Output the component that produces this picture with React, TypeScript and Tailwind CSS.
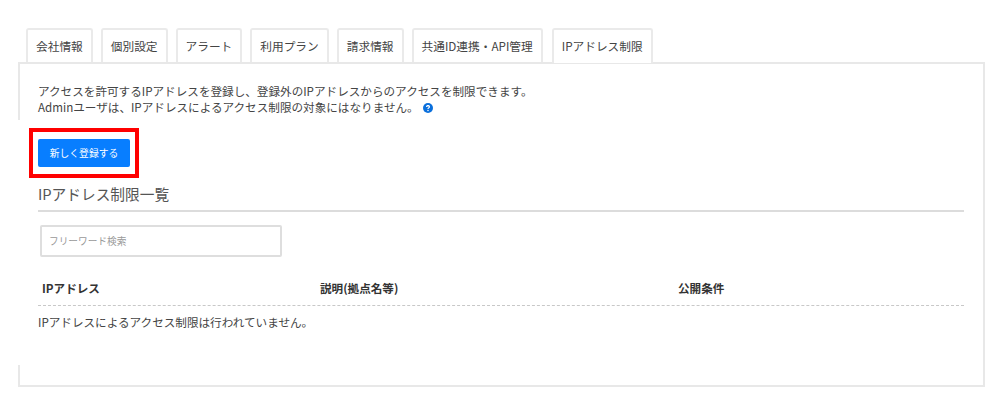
import React from "react";

const tabs = ["会社情報", "個別設定", "アラート", "利用プラン", "請求情報", "共通ID連携・API管理", "IPアドレス制限"];

function Tabs() {
  return (
    <div className="flex gap-[8px] pl-[8px] h-[35px] relative z-10">
      {tabs.map((tab, i) => (
        <div
          key={tab}
          className={`flex items-center text-[11.7px] text-[#444] bg-white border-2 border-b-0 border-[#eaeaea] rounded-t-[3px] ${
            i === tabs.length - 1 ? "h-[35px] ml-[1px] px-[8px] pb-[2px]" : "h-[34px] px-[8px] pb-[1px]"
          }`}
        >
          {tab}
        </div>
      ))}
    </div>
  );
}

export default function App() {
  return (
    <div
      className="w-[997px] h-[401px] bg-white pt-[28px] pl-[18px] overflow-hidden"
      style={{ fontFamily: '"Noto Sans CJK JP", "Noto Sans", sans-serif' }}
    >
      <Tabs />
      <div className="relative w-[967px] h-[325px] -mt-[1px] border-2 border-[#e8e8e8] pt-[19px] pl-[18px] pr-[19px]">
        {/* left edge is cut away in the screenshot */}
        <div className="absolute -left-[2px] top-[56px] w-[2px] h-[245px] bg-white"></div>
        <p className="text-[11.6px] leading-[16px] text-[#444]">
          アクセスを許可するIPアドレスを登録し、登録外のIPアドレスからのアクセスを制限できます。
          <br />
          Adminユーザは、IPアドレスによるアクセス制限の対象にはなりません。
          <svg viewBox="0 0 16 16" className="inline-block w-[10px] h-[10px] ml-[4px] align-[-1px]">
            <circle cx="8" cy="8" r="8" fill="#0a6fdc" />
            <path d="M4.8 6.2C4.900 4.300 6.300 3.300 8 3.300c1.900 0 3.200 1.100 3.200 2.700 0 1.200-.7 1.800-1.500 2.300-.6.4-.8.7-.8 1.400H7c0-1.200.4-1.800 1.200-2.300.6-.4.9-.8.9-1.300 0-.6-.5-1-1.100-1-.7 0-1.100.4-1.200 1.100z" fill="#fff" />
            <circle cx="8" cy="12" r="1.200" fill="#fff" />
          </svg>
        </p>
        <div className="mt-[24px]">
          <button className="relative w-[92px] h-[28px] bg-[#087eff] rounded-[2px] text-white text-[9.8px] flex items-center justify-center">
            新しく登録する
            <span className="absolute -left-[9px] -top-[11px] w-[110px] h-[50px] border-[4px] border-[#ff0000]"></span>
          </button>
        </div>
        <h2 className="mt-[17px] text-[14.7px] leading-[20px] text-[#555] pb-[6px] border-b-2 border-[#dcdcdc]">
          IPアドレス制限一覧
        </h2>
        <div className="mt-[13px] ml-[2px] w-[242px] h-[32px] border-2 border-[#dedede] rounded-[2px] flex items-center pl-[7px] text-[9.7px] text-[#999]">
          フリーワード検索
        </div>
        <div className="mt-[23px] flex h-[26px] border-b border-dashed border-[#c8c8c8] text-[11.6px] font-bold text-[#333] pl-[4px]">
          <div className="w-[278px]">IPアドレス</div>
          <div className="w-[358px]">説明(拠点名等)</div>
          <div>公開条件</div>
        </div>
        <p className="mt-[9px] text-[11.6px] leading-[15px] text-[#444]">IPアドレスによるアクセス制限は行われていません。</p>
      </div>
    </div>
  );
}
